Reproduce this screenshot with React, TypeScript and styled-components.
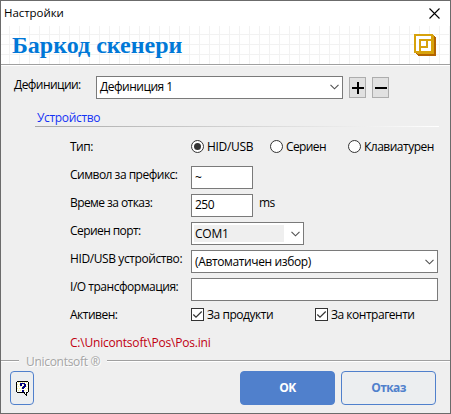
import React from "react";
import styled, { createGlobalStyle } from "styled-components";

const Global = createGlobalStyle`
  * { box-sizing: border-box; }
  body { margin: 0; }
`;

const Dialog = styled.div`
  width: 451px;
  height: 414px;
  display: flex;
  flex-direction: column;
  overflow: hidden;
  background: #efefef;
  border: 1px solid #6b6b6b;
  font: 12px/18px "Open Sans", "Noto Sans", sans-serif;
  color: #000;
`;

const TitleBar = styled.div`
  height: 25px;
  flex: none;
  display: flex;
  justify-content: space-between;
  padding: 3px 10px 0 3px;
  background: #fff;
  font-size: 11.5px;
`;

const CloseSlot = styled.div`
  margin-top: 4px;
  height: 11px;
  display: flex;
`;

const Banner = styled.div`
  height: 40px;
  flex: none;
  display: flex;
  justify-content: space-between;
  align-items: flex-start;
  padding: 8px 14px 0 11px;
  border-bottom: 1px solid #fff;
  box-shadow: inset 0 -1px 0 #a0a0a0;
  background-color: #fff;
  background-image: linear-gradient(90deg, #f2f2f2 1px, transparent 1px),
    linear-gradient(#f2f2f2 1px, transparent 1px);
  background-size: 10px 10px;
  background-position: 8px 8px;
`;

const Heading = styled.h1`
  margin: -2px 0 0;
  font: bold 24px/26px "Liberation Serif", serif;
  color: #0078d7;
`;

/* Text run with an explicit tracking value. */
const Label = styled.span<{ $track?: number; $w?: number }>`
  display: block;
  flex: none;
  white-space: pre;
  width: ${(p) => (p.$w ? p.$w + "px" : "auto")};
  letter-spacing: ${(p) => p.$track ?? -0.5}px;
`;

const DefinitionRow = styled.div`
  display: flex;
  flex: none;
  height: 43px;
  padding: 10px 0 0 13px;
`;

const Field = styled.div<{ $w: number; $raised?: boolean }>`
  width: ${(p) => p.$w}px;
  height: 23px;
  flex: none;
  display: flex;
  align-items: center;
  justify-content: space-between;
  padding: 0 3px ${(p) => (p.$raised ? 2 : 0)}px;
  border: 1px solid #7a7a7a;
  background: #fff;
`;

const Disabled = styled.div`
  width: 90px;
  height: 17px;
  margin-left: -1px;
  padding-left: 1px;
  display: flex;
  align-items: center;
  background: #efefef;
`;

const SquareButton = styled.button`
  width: 17px;
  height: 21px;
  margin: 1px 0 0 6px;
  padding: 0;
  display: flex;
  border: 1px solid #adadad;
  background: #e1e1e1;
`;

const Section = styled.div`
  height: 18px;
  flex: none;
  margin: 0 11px 0 34px;
  padding-left: 2px;
  color: #1432f5;
  border-bottom: 1px solid transparent;
  border-image: linear-gradient(90deg, #a8a8a8, #fff) 1;
`;

const Form = styled.div`
  flex: none;
  display: flex;
  flex-direction: column;
  padding: 6px 0 0 69px;
`;

const Row = styled.div`
  height: 28px;
  display: flex;

  ${Field} { margin-top: 5px; }
`;

const Option = styled.div<{ $w: number }>`
  width: ${(p) => p.$w}px;
  flex: none;
  display: flex;
  gap: 3px;
  svg { flex: none; margin-top: 7px; }
  span { margin-top: 5px; }
`;

const RowLabel = styled(Label)`
  width: 121px;
  margin-top: 5px;
`;

const Unit = styled(Label)`
  margin: 5px 0 0 6px;
`;

const PathLabel = styled(Label)`
  margin-top: 5px;
  color: #c00010;
`;

const FooterRule = styled.div`
  height: 18px;
  flex: none;
  margin-top: -5px;
  display: flex;
  gap: 7px;
  color: #a5a5a5;
  text-shadow: 1px 1px 0 #fff;
  span { margin-top: 1px; }
`;

const Rule = styled.i<{ $w?: number }>`
  height: 2px;
  margin-top: 8px;
  width: ${(p) => (p.$w ? p.$w + "px" : "auto")};
  flex: ${(p) => (p.$w ? "none" : "1")};
  background: linear-gradient(#a0a0a0 50%, #fff 50%);
`;

const Footer = styled.div`
  display: flex;
  gap: 6px;
  flex: none;
  padding: 1px 14px 0 9px;
`;

const Button = styled.button<{ $primary?: boolean; $w: number }>`
  width: ${(p) => p.$w}px;
  height: 34px;
  padding: 0;
  display: flex;
  align-items: center;
  justify-content: center;
  border: 1px solid #5080cc;
  border-radius: 4px;
  background: ${(p) => (p.$primary ? "#5080cc" : "#eceef0")};
  color: ${(p) => (p.$primary ? "#fff" : "#5080cc")};
  font: bold 12px/18px "Open Sans", "Noto Sans", sans-serif;
`;

const Spacer = styled.div`
  flex: 1;
`;

const Chevron = () => (
  <svg width="9" height="6" viewBox="0 0 9 6" fill="none" stroke="#505050" strokeWidth="1.1">
    <path d="M.5 .8 4.5 4.8 8.5 .8" />
  </svg>
);

const Radio = ({ on }: { on?: boolean }) => (
  <svg width="13" height="13" viewBox="0 0 13 13">
    <circle cx="6.5" cy="6.5" r="6" fill="#fff" stroke="#333" />
    {on && <circle cx="6.5" cy="6.5" r="3.5" fill="#333" />}
  </svg>
);

const Check = () => (
  <svg width="13" height="13" viewBox="0 0 13 13">
    <rect x=".5" y=".5" width="12" height="12" fill="#fff" stroke="#333" />
    <path d="M2.3 6.5 5 9.2 10.7 3.5" fill="none" stroke="#333" strokeWidth="1.2" />
  </svg>
);

const Close = () => (
  <svg width="11" height="11" viewBox="0 0 11 11" stroke="#000" strokeWidth="1.1">
    <path d="M.5 .5 10.5 10.5M10.5 .5 .5 10.5" />
  </svg>
);

const Logo = () => (
  <svg width="22" height="22" viewBox="0 0 22 22" shapeRendering="crispEdges">
    <path d="M19 1h1v1h1v1h1v19H4v-1H3v-1H2v-1h17z" fill="#b46400" />
    <path d="M0 0h19v1h1v1h1v18H3v-1H0z" fill="#d7a20c" />
    <path d="M20 2h1v1h1v19H4v-1H3v-1h17z" fill="#b46400" />
    <path d="M2 2h15v15H2z" fill="#fff" />
    <path d="M5 5h12v2H5zM5 5h2v12H5zM12 7h2v7H7v-2h5z" fill="#d7a20c" />
  </svg>
);

const Help = () => (
  <svg width="13" height="15" viewBox="0 0 13 15" shapeRendering="crispEdges">
    <path d="M1 0h11v1h1v10h-1v1h-1v3h-1v-1H9v-1H8v-1H1v-1H0V1h1z" fill="#000" />
    <path d="M1 1h11v10h-2v2H9v-2H1z" fill="#fff" />
    <path
      d="M2 1.5h10M1 3.5h11M2 5.5h10M1 7.5h11M2 9.5h10"
      stroke="#f6f290"
      strokeDasharray="1 1"
    />
    <path d="M4 2h5v1h1v3H9v1H8v1H6V6h1V5h1V3H6v2H4zM6 9h2v2H6z" fill="#000080" />
  </svg>
);

export default function App() {
  return (
    <>
      <Global />
      <Dialog>
        <TitleBar>
          <Label $track={-0.05}>Настройки</Label>
          <CloseSlot><Close /></CloseSlot>
        </TitleBar>
        <Banner>
          <Heading>Баркод скенери</Heading>
          <Logo />
        </Banner>
        <DefinitionRow>
          <Label $w={82} $track={-0.57}>Дефиниции:</Label>
          <Field $w={247} $raised><Label>Дефиниция 1</Label><Chevron /></Field>
          <SquareButton aria-label="+">
            <svg width="15" height="19" stroke="#000" strokeWidth="2"><path d="M2 10h12M8 4v12" /></svg>
          </SquareButton>
          <SquareButton aria-label="-">
            <svg width="15" height="19" stroke="#000" strokeWidth="2"><path d="M2 10h12" /></svg>
          </SquareButton>
        </DefinitionRow>
        <Section><Label $track={-0.33}>Устройство</Label></Section>
        <Form>
          <Row>
            <RowLabel>Тип:</RowLabel>
            <Option $w={79}><Radio on /><Label $track={-0.3}>HID/USB</Label></Option>
            <Option $w={78}><Radio /><Label $track={-0.6}>Сериен</Label></Option>
            <Option $w={95}><Radio /><Label>Клавиатурен</Label></Option>
          </Row>
          <Row>
            <RowLabel $track={-0.5}>Символ за префикс:</RowLabel>
            <Field $w={62}><Label>~</Label></Field>
          </Row>
          <Row>
            <RowLabel $track={-0.57}>Време за отказ:</RowLabel>
            <Field $w={62} $raised><Label>250</Label></Field>
            <Unit $track={-0.6}>ms</Unit>
          </Row>
          <Row>
            <RowLabel $track={-0.57}>Сериен порт:</RowLabel>
            <Field $w={113}><Disabled><Label $track={-0.2}>COM1</Label></Disabled><Chevron /></Field>
          </Row>
          <Row>
            <RowLabel $track={-0.4}>HID/USB устройство:</RowLabel>
            <Field $w={247}><Label $track={-0.37}>(Автоматичен избор)</Label><Chevron /></Field>
          </Row>
          <Row><RowLabel $track={-0.47}>I/O трансформация:</RowLabel><Field $w={247} /></Row>
          <Row>
            <RowLabel>Активен:</RowLabel>
            <Option $w={124}><Check /><Label $track={-0.45}>За продукти</Label></Option>
            <Option $w={110}><Check /><Label $track={-0.48}>За контрагенти</Label></Option>
          </Row>
          <Row><PathLabel $track={-0.2}>C:\Unicontsoft\Pos\Pos.ini</PathLabel></Row>
        </Form>
        <FooterRule>
          <Rule $w={18} />
          <Label $track={-0.3}>Unicontsoft ®</Label>
          <Rule />
        </FooterRule>
        <Footer>
          <Button $w={24} aria-label="Help"><Help /></Button>
          <Spacer />
          <Button $w={95} $primary><Label $track={-0.4}>OK</Label></Button>
          <Button $w={95}><Label $track={-0.6}>Отказ</Label></Button>
        </Footer>
      </Dialog>
    </>
  );
}
